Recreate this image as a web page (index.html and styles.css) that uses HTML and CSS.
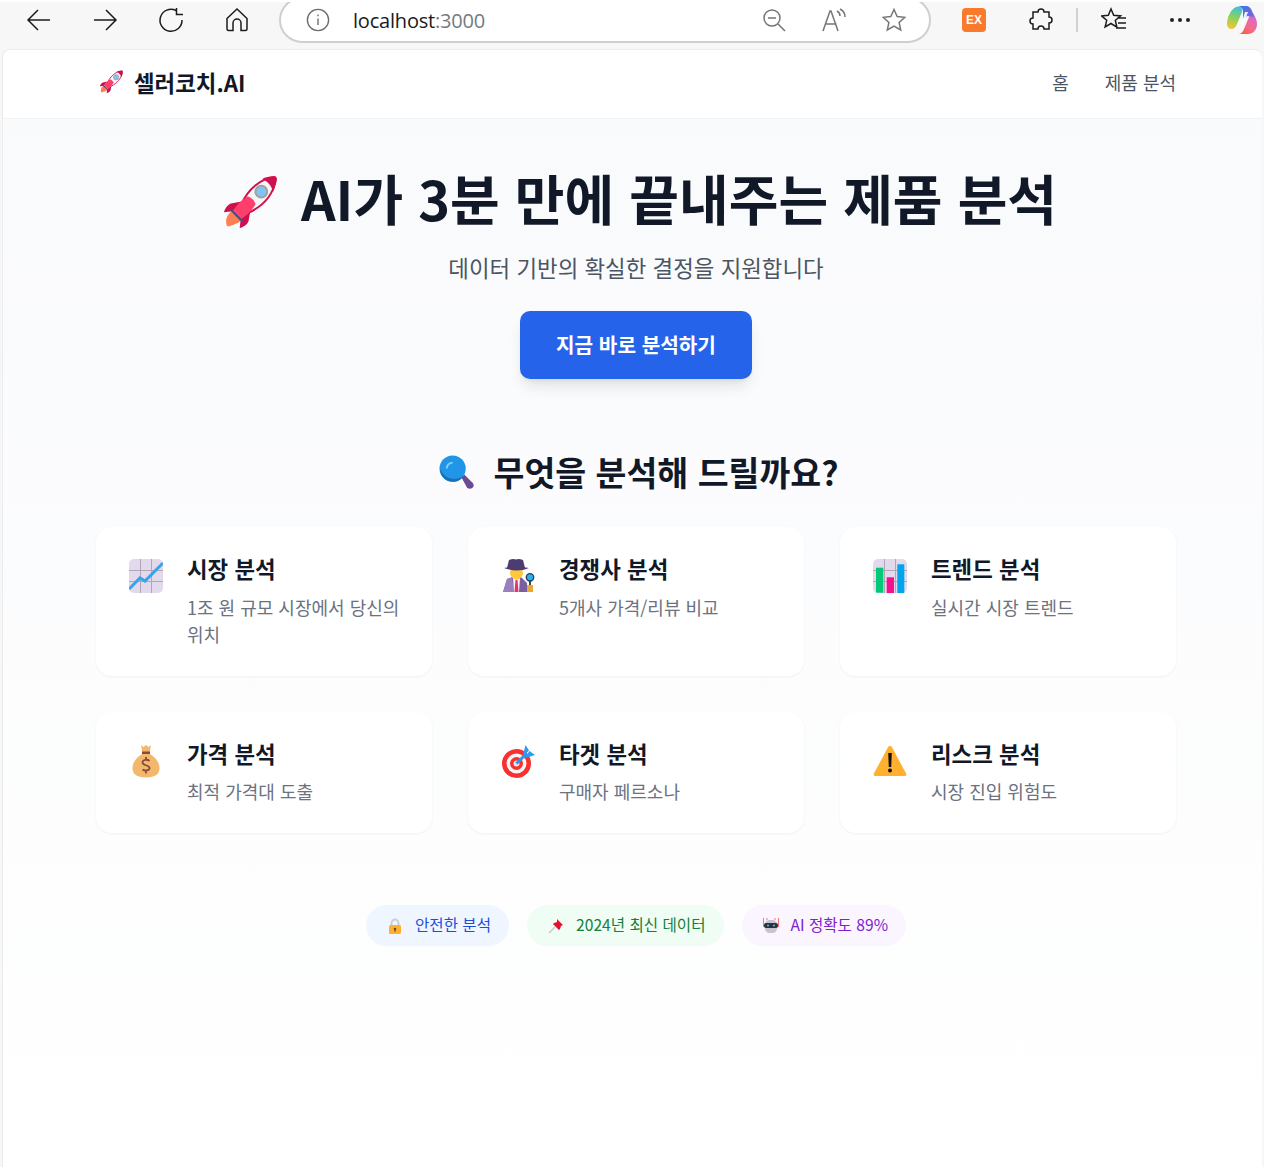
FILE: index.html
```html
<!DOCTYPE html>
<html lang="ko">
	<head>
		<meta charset="UTF-8">
		<meta name="viewport" content="width=device-width, initial-scale=1">
		<title>셀러코치.AI</title>
		<link rel="stylesheet" href="styles.css">
	</head>
	<body>
		<svg class="defs" width="0" height="0" aria-hidden="true">
			<symbol id="rocket" viewBox="0 0 56 56">
				<path d="M5 52c-2-6 0-12 5-15l9 9c-2 4-7 3-7 5-2-1-4 2-7 1z" fill="#ff7f50"/>
				<path d="M20 29c7-15 19-25 33-27 2 0 2 1 2 3-3 14-12 26-27 33z" fill="#f4f4f4" stroke="#d0104c" stroke-width="2"/>
				<path d="M41 4c4-2 9-3 12-2 2 0 2 1 2 3 0 3-1 8-3 12-2-7-5-10-11-13z" fill="#d0104c"/>
				<path d="M20 27l-11 2c-3 1-6 5-7 9l9-1zM29 36l-2 11c-1 3-5 6-9 7l1-9z" fill="#d0104c"/>
				<path d="M26 22c-5 3-11 8-14 14l8 8c6-3 11-9 14-14 0-3-5-8-8-8z" fill="#ff3e6c"/>
				<path d="M10 34l12 12-2 2-12-12z" fill="#5c4a78"/>
				<circle cx="40" cy="17" r="6" fill="#7fc4f5" stroke="#a0a0a0" stroke-width="2"/>
			</symbol>
			<symbol id="lens" viewBox="0 0 36 36">
				<path d="M23 23l3-3 9 9c1 2 1 4-1 5-1 1-3 1-5 0z" fill="#6b4a94"/>
				<circle cx="14" cy="14" r="13.5" fill="#2196e8"/>
				<path d="M7 14c0-4 3-7 7-7v2c-3 0-5 2-5 5z" fill="#7fd0ff"/>
				<path d="M14 27.500c-7 0-13-6-13-13 3 6 8 10 13 10s8-1 11-3c-2 4-6 6-11 6z" fill="#1b6fb5"/>
			</symbol>
			<symbol id="chart-up" viewBox="0 0 34 34">
				<rect width="34" height="34" rx="5" fill="#e2d9ec"/>
				<path d="M11.500 0v34M22.500 0v34M0 11.500h34M0 22.500h34" stroke="#b3a5b6" stroke-width="1"/>
				<path d="M0 30l11-11 5 3 18-18" fill="none" stroke="#35a4ea" stroke-width="3"/>
			</symbol>
			<symbol id="detective" viewBox="0 0 34 34">
				<path d="M2 33l4-13 7-2h7l6 6v9z" fill="#7b5ea0"/>
				<path d="M6 20l5-2 2 15H2z" fill="#9a80bc"/>
				<path d="M12 19h7l-1 14h-5z" fill="#f4f4f4"/>
				<path d="M14.500 21h2l1 12h-4z" fill="#e5336a"/>
				<circle cx="15.500" cy="14" r="6.500" fill="#ffc83d"/>
				<path d="M8 1q4-1.500 7-.5q3-1 7 .5l2 8H6z" fill="#4b3c72"/>
				<path d="M3 9q12-3 25 0q-12 5-25 0z" fill="#4b3c72"/>
				<path d="M28 21h2v6h-2z" fill="#444"/>
				<rect x="26" y="26" width="6" height="7" fill="#e8a92e"/>
				<circle cx="29" cy="18.300" r="3.700" fill="#28b4e8" stroke="#2c3e64" stroke-width="1.400"/>
			</symbol>
			<symbol id="chart-bars" viewBox="0 0 34 34">
				<rect width="34" height="34" rx="5" fill="#e2d9ec"/>
				<path d="M11.500 0v34M22.500 0v34M0 11.500h34M0 22.500h34" stroke="#b3a5b6" stroke-width="1"/>
				<rect x="3" y="8.700" width="7.300" height="25" fill="#00c979"/>
				<rect x="13.700" y="18.300" width="7.300" height="15.700" fill="#f5108f"/>
				<rect x="24.300" y="5.300" width="7" height="28.700" fill="#00a6ed"/>
			</symbol>
			<symbol id="money" viewBox="0 0 34 34">
				<path d="M12 1l2.500 2L17 1l2.500 2L22 1l-1.500 8h-7z" fill="#f3b86d"/>
				<path d="M13 7.500h8V10h-8z" fill="#8a4b38"/>
				<path d="M13 10h8c5 3 9.500 8 9.500 14 0 6-4 9.500-13.500 9.500S3.500 30 3.500 24c0-6 4.500-11 9.500-14z" fill="#f3b86d"/>
				<path d="M17 13v2M20.500 17c-2-2-7-1.500-7 1.500 0 3.500 7 2 7 5.500 0 3-5 3-7 1.500M17 27.500v2" fill="none" stroke="#8a4b38" stroke-width="1.800"/>
			</symbol>
			<symbol id="target" viewBox="0 0 34 34">
				<circle cx="15.500" cy="19.500" r="14.500" fill="#f92f30"/>
				<circle cx="15.500" cy="19.500" r="10" fill="#f4f4f4"/>
				<circle cx="15.500" cy="19.500" r="6.500" fill="#f92f30"/>
				<circle cx="15.500" cy="19.500" r="3" fill="#e6e6e6"/>
				<path d="M15.500 19.500l10-10" stroke="#3c8ee8" stroke-width="3"/>
				<path d="M21.500 13l3-12 3.500 5.500zM23 14.500l11-3.500-5.500-4z" fill="#2f9bf0"/>
			</symbol>
			<symbol id="warning" viewBox="0 0 34 34">
				<path d="M17 2c1 0 1.500.5 2 1.300l14 26c.8 1.700 0 2.700-1.500 2.700h-29C1 32 .2 31 1 29.300l14-26C15.500 2.500 16 2 17 2z" fill="#ffb02e"/>
				<path d="M15.200 9h3.600l-.6 14h-2.400z" fill="#111"/>
				<circle cx="17" cy="26.500" r="2" fill="#111"/>
			</symbol>
			<symbol id="lock" viewBox="0 0 16 16">
				<path d="M4.500 8V5a3.500 3.500 0 0 1 7 0v3" fill="none" stroke="#c8ccd4" stroke-width="1.800"/>
				<rect x="2" y="7" width="12" height="9" rx="1.500" fill="#ffb02e"/>
				<circle cx="8" cy="11" r="1.300" fill="#6b4a2a"/>
				<rect x="7.500" y="11" width="1" height="3" fill="#6b4a2a"/>
			</symbol>
			<symbol id="pin" viewBox="0 0 16 16">
				<path d="M1 15l6-6" stroke="#c8c8c8" stroke-width="1.500"/>
				<path d="M9 1l6 6-2 1-1 3-1 1-6-6 1-1 3-1z" fill="#e5102f"/>
			</symbol>
			<symbol id="robot" viewBox="0 0 16 16">
				<path d="M.5 0v9M15.500 0v9M3 1h2M11 1h2" stroke="#f2787a" stroke-width="1"/>
				<rect x="2" y="2" width="12" height="13" rx="4.500" fill="#c9c3cf"/>
				<rect x="1" y="5" width="14" height="5" rx="2" fill="#2c3340"/>
				<circle cx="5" cy="7.500" r="1.100" fill="#45b4f0"/>
				<circle cx="11" cy="7.500" r="1.100" fill="#45b4f0"/>
			</symbol>
		</svg>

		<div class="toolbar">
			<span class="tool">
				<svg viewBox="0 0 26 26" class="ico"><path d="M24 13H2M12 3L2 13l10 10" /></svg>
			</span>
			<span class="tool">
				<svg viewBox="0 0 26 26" class="ico"><path d="M2 13h22M14 3l10 10-10 10" /></svg>
			</span>
			<span class="tool">
				<svg viewBox="0 0 26 26" class="ico"><path d="M18 3.500A11 11 0 1 0 24 13M18.500 1v6.500H25" /></svg>
			</span>
			<span class="tool">
				<svg viewBox="0 0 26 26" class="ico"><path d="M3 11.500L13 2l10 9.500V22a1.500 1.500 0 0 1-1.500 1.500H17V16a4 4 0 0 0-8 0v7.500H4.500A1.500 1.500 0 0 1 3 22z" /></svg>
			</span>
			<div class="urlbar">
				<svg viewBox="0 0 26 26" class="ico info"><circle cx="13" cy="13" r="11.500" /><path d="M13 11.500v7M13 7v2" /></svg>
				<span class="url">localhost<em>:3000</em></span>
				<span class="url-tools">
					<svg viewBox="0 0 24 24" class="ico grey"><circle cx="10" cy="10" r="8" /><path d="M6 10h8M16 16l7 7" /></svg>
					<svg viewBox="0 0 24 24" class="ico grey"><path d="M1 23L8 3h1l7 20M3.500 16h11M15 3c2 1 3 3 3 5M18 1c3 1.500 5 4.500 5 8" /></svg>
					<svg viewBox="0 0 24 24" class="ico grey"><path d="M12 1.500l3.200 7 7.600.8-5.700 5.100 1.600 7.500-6.700-3.900-6.700 3.900 1.600-7.500L1.200 9.300l7.600-.8z" /></svg>
				</span>
			</div>
			<span class="ex">EX</span>
			<svg viewBox="0 0 24 24" class="ico puzzle"><path d="M9 4a3 3 0 0 1 6 0h5v5a3 3 0 0 1 0 6v6h-5a3 3 0 0 0-6 0H4v-5a3 3 0 0 1 0-6V4z" /></svg>
			<span class="divider"></span>
			<svg viewBox="0 0 26 26" class="ico favs"><path d="M10 2l2.700 6.300 6.800.6-5.200 4.500 1.600 6.700-5.900-3.600L4.100 20l1.600-6.700L.5 8.900l6.800-.6zM17 11h8M17 16h8M15 21h10" /></svg>
			<span class="dots"><i></i><i></i><i></i></span>
			<svg viewBox="0 0 32 32" class="copilot">
				<defs>
					<linearGradient id="cp1" x1="0" y1="0" x2="1" y2="1"><stop offset="0" stop-color="#2f7de1"/><stop offset="1" stop-color="#8a5ce0"/></linearGradient>
					<linearGradient id="cp2" x1=".6" y1="0" x2=".4" y2="1"><stop offset="0" stop-color="#3ec2d6"/><stop offset=".6" stop-color="#9bd34a"/><stop offset="1" stop-color="#f6c33c"/></linearGradient>
					<linearGradient id="cp3" x1=".8" y1="0" x2=".2" y2="1"><stop offset="0" stop-color="#c86ae0"/><stop offset=".6" stop-color="#f76a8a"/><stop offset="1" stop-color="#f2603c"/></linearGradient>
				</defs>
				<path d="M27 9c2 3 4 7 4 11 0 6-4 10-9 10H12c3 0 5-2 6-5l5-12c1-3 3-5 4-4z" fill="url(#cp3)"/>
				<path d="M10 3C4 6 1 14 1 20c0 3 2 5 4 5 3 0 5-2 6-5l5-12c1-3-1-7-6-5z" fill="url(#cp2)"/>
				<path d="M11 2h9c3 0 5 2 6 5l2 6-7-1-4 4V7c0-3-3-5-6-5z" fill="url(#cp1)"/>
				<path d="M19 8h3l-6 16h-2z" fill="#fff" opacity=".9"/>
			</svg>
		</div>

		<div class="page">
			<header class="nav">
				<div class="brand">
					<svg class="brand-icon"><use href="#rocket"/></svg>
					<span>셀러코치.AI</span>
				</div>
				<nav class="nav-links">
					<a href="#">홈</a>
					<a href="#">제품 분석</a>
				</nav>
			</header>

			<main class="main">
				<section class="hero">
					<h1><svg class="hero-icon"><use href="#rocket"/></svg>AI가 3분 만에 끝내주는 제품 분석</h1>
					<p>데이터 기반의 확실한 결정을 지원합니다</p>
					<a href="#" class="cta">지금 바로 분석하기</a>
				</section>

				<h2 class="section-title"><svg class="section-icon"><use href="#lens"/></svg>무엇을 분석해 드릴까요?</h2>

				<div class="cards">
					<article class="card">
						<svg class="card-icon"><use href="#chart-up"/></svg>
						<div>
							<h3>시장 분석</h3>
							<p>1조 원 규모 시장에서 당신의 위치</p>
						</div>
					</article>
					<article class="card">
						<svg class="card-icon"><use href="#detective"/></svg>
						<div>
							<h3>경쟁사 분석</h3>
							<p>5개사 가격/리뷰 비교</p>
						</div>
					</article>
					<article class="card">
						<svg class="card-icon"><use href="#chart-bars"/></svg>
						<div>
							<h3>트렌드 분석</h3>
							<p>실시간 시장 트렌드</p>
						</div>
					</article>
					<article class="card">
						<svg class="card-icon"><use href="#money"/></svg>
						<div>
							<h3>가격 분석</h3>
							<p>최적 가격대 도출</p>
						</div>
					</article>
					<article class="card">
						<svg class="card-icon"><use href="#target"/></svg>
						<div>
							<h3>타겟 분석</h3>
							<p>구매자 페르소나</p>
						</div>
					</article>
					<article class="card">
						<svg class="card-icon"><use href="#warning"/></svg>
						<div>
							<h3>리스크 분석</h3>
							<p>시장 진입 위험도</p>
						</div>
					</article>
				</div>

				<div class="badges">
					<span class="badge blue"><svg><use href="#lock"/></svg>안전한 분석</span>
					<span class="badge green"><svg><use href="#pin"/></svg>2024년 최신 데이터</span>
					<span class="badge purple"><svg><use href="#robot"/></svg>AI 정확도 89%</span>
				</div>
			</main>
		</div>
	</body>
</html>
```

FILE: styles.css
```css
html,
body {
	margin: 0;
	height: 100%;
}
body {
	background: #f7f7f7;
	color: #111827;
	font-family: "Noto Sans CJK KR", "Noto Sans", sans-serif;
	display: flex;
	flex-direction: column;
	overflow: hidden;
}
h1,
h2,
h3,
p {
	margin: 0;
}
a {
	color: inherit;
	text-decoration: none;
}
.defs {
	position: absolute;
}

/* browser chrome */
.toolbar {
	height: 50px;
	box-sizing: border-box;
	flex: none;
	display: flex;
	align-items: center;
	padding: 0 0 12px 6px;
	border-top: 2px solid #fff;
	overflow: hidden;
}
.tool {
	width: 66px;
	display: flex;
	justify-content: center;
}
.ico {
	width: 26px;
	height: 26px;
	fill: none;
	stroke: #1c1c1c;
	stroke-width: 1.5;
}
.ico.grey {
	width: 24px;
	height: 24px;
	stroke: #767676;
}
.urlbar {
	flex: none;
	width: 652px;
	height: 46px;
	box-sizing: border-box;
	margin-left: 9px;
	border: 2px solid #cfcfcf;
	border-radius: 23px;
	background: #fff;
	display: flex;
	align-items: center;
	padding-left: 25px;
}
.info {
	width: 24px;
	height: 24px;
	stroke: #6e6e6e;
}
.url {
	margin-left: 23px;
	font-family: "Open Sans", sans-serif;
	font-size: 20px;
	letter-spacing: -.2px;
	color: #1a1a1a;
}
.url em {
	font-style: normal;
	color: #6f7b85;
}
.url-tools {
	margin-left: auto;
	margin-right: 23px;
	display: flex;
	gap: 36px;
}
.ex {
	width: 24px;
	height: 24px;
	margin-left: 31px;
	border-radius: 4px;
	background: #f97a2b;
	color: #fff;
	font: bold 12px/24px "Liberation Sans", sans-serif;
	text-align: center;
}
.puzzle {
	margin-left: 43px;
	width: 24px;
	height: 24px;
}
.divider {
	width: 2px;
	height: 24px;
	background: #d0d0d0;
	margin-left: 23px;
}
.favs {
	margin-left: 23px;
}
.dots {
	display: flex;
	gap: 4px;
	margin-left: 43px;
}
.dots i {
	width: 4px;
	height: 4px;
	border-radius: 50%;
	background: #222;
}
.copilot {
	flex: none;
	width: 32px;
	height: 32px;
	margin-left: 36px;
}

/* page */
.page {
	flex: 1;
	margin: -1px 2px 0 2px;
	border-radius: 8px 8px 0 0;
	background: #fff;
	display: flex;
	flex-direction: column;
	min-height: 0;
	border-top: 1px solid #ececec;
	border-left: 1px solid #ececec;
	overflow: hidden;
}
.nav {
	height: 69px;
	flex: none;
	box-sizing: border-box;
	display: flex;
	align-items: center;
	justify-content: space-between;
	padding: 0 86px 4px 96px;
	border-bottom: 1px solid #f1f2f4;
}
.brand {
	display: flex;
	align-items: center;
	gap: 11px;
	font-size: 22.400px;
	font-weight: 700;
}
.brand-icon {
	width: 24px;
	height: 24px;
}
.nav-links {
	display: flex;
	gap: 36px;
	font-size: 18px;
	color: #4b5563;
}
.main {
	flex: 1;
	background: linear-gradient(#f9fafc, #fff);
	padding: 0 86px 0 93px;
}
.hero {
	text-align: center;
}
.hero h1 {
	margin-top: 45px;
	font-size: 54px;
	line-height: 68px;
	font-weight: 700;
	display: flex;
	align-items: center;
	justify-content: center;
	gap: 24px;
	padding-left: 7px;
}
.hero-icon {
	width: 55px;
	height: 55px;
	margin-top: 8px;
}
.hero p {
	margin-top: 20px;
	font-size: 22.400px;
	line-height: 30px;
	color: #4b5563;
}
.cta {
	display: inline-block;
	margin-top: 29px;
	width: 232px;
	height: 68px;
	line-height: 68px;
	border-radius: 10px;
	background: #2563eb;
	color: #fff;
	font-size: 20.200px;
	font-weight: 700;
	box-shadow: 0 10px 15px -3px rgba(0, 0, 0, .1), 0 4px 6px -4px rgba(0, 0, 0, .1);
}
.section-title {
	margin-top: 70px;
	font-size: 33.600px;
	line-height: 46px;
	font-weight: 700;
	display: flex;
	align-items: center;
	justify-content: center;
	gap: 19px;
	padding-left: 6px;
}
.section-icon {
	width: 35px;
	height: 35px;
}
.cards {
	margin-top: 32px;
	display: grid;
	grid-template-columns: repeat(3, 1fr);
	gap: 36px;
}
.card {
	background: #fff;
	border-radius: 16px;
	padding: 26px 30px 28px 33px;
	display: flex;
	gap: 24px;
	box-shadow: 0 1px 3px rgba(0, 0, 0, .05);
}
.card-icon {
	flex: none;
	width: 34px;
	height: 34px;
	margin-top: 6px;
}
.card h3 {
	font-size: 22.400px;
	line-height: 30px;
	font-weight: 700;
}
.card p {
	margin-top: 10.500px;
	font-size: 18px;
	line-height: 27px;
	color: #6b7280;
	word-break: keep-all;
}
.badges {
	margin-top: 72px;
	display: flex;
	justify-content: center;
	gap: 18px;
}
.badge {
	display: flex;
	align-items: center;
	box-sizing: border-box;
	height: 41px;
	padding: 0 18px 3px 21px;
	border-radius: 21px;
	font-size: 15.600px;
}
.badge svg {
	width: 16px;
	height: 16px;
	margin: 3px 12px 0 0;
}
.blue {
	background: #eff6ff;
	color: #1d4ed8;
}
.green {
	background: #f0fdf4;
	color: #15803d;
}
.purple {
	background: #faf5ff;
	color: #7e22ce;
}
```
